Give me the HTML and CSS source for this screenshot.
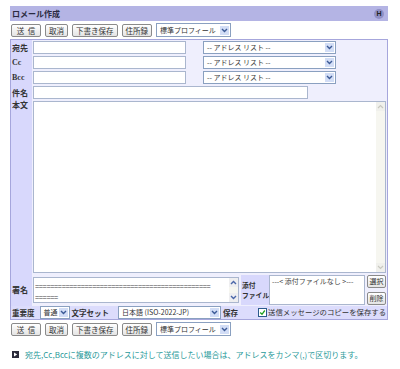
FILE: index.html
```html
<!DOCTYPE html>
<html lang="ja">

<head>
  <meta charset="UTF-8">
  <title>メール作成</title>
  <link rel="stylesheet" href="styles.css">
</head>

<body>
  <div class="mail">

    <div class="titlebar">
      <span class="title">ロメール作成</span>
      <span class="help">H</span>
    </div>

    <div class="toolbar">
      <span class="btn send">送&nbsp;&nbsp;信</span>
      <span class="btn">取消</span>
      <span class="btn">下書き保存</span>
      <span class="btn">住所録</span>
      <span class="select profile"><span class="val">標準プロフィール</span><span class="arrow"><svg width="7" height="5" viewBox="0 0 7 5"><path d="M1 1l2.5 2.5L6 1" fill="none" stroke="#3c5a96" stroke-width="1.4"/></svg></span></span>
    </div>

    <div class="form">
      <div class="row">
        <div class="label">宛先</div>
        <div class="field">
          <span class="input addr"></span>
          <span class="select list"><span class="val">-- アドレス リスト --</span><span class="arrow"><svg width="7" height="5" viewBox="0 0 7 5"><path d="M1 1l2.5 2.5L6 1" fill="none" stroke="#3c5a96" stroke-width="1.4"/></svg></span></span>
        </div>
      </div>
      <div class="row">
        <div class="label latin">Cc</div>
        <div class="field">
          <span class="input addr"></span>
          <span class="select list"><span class="val">-- アドレス リスト --</span><span class="arrow"><svg width="7" height="5" viewBox="0 0 7 5"><path d="M1 1l2.5 2.5L6 1" fill="none" stroke="#3c5a96" stroke-width="1.4"/></svg></span></span>
        </div>
      </div>
      <div class="row">
        <div class="label latin">Bcc</div>
        <div class="field">
          <span class="input addr"></span>
          <span class="select list"><span class="val">-- アドレス リスト --</span><span class="arrow"><svg width="7" height="5" viewBox="0 0 7 5"><path d="M1 1l2.5 2.5L6 1" fill="none" stroke="#3c5a96" stroke-width="1.4"/></svg></span></span>
        </div>
      </div>
      <div class="row">
        <div class="label">件名</div>
        <div class="field">
          <span class="input subject"></span>
        </div>
      </div>

      <div class="row body-row">
        <div class="label top">本文</div>
        <div class="field">
          <div class="textbox body">
            <div class="text"></div>
            <div class="scroll pale">
              <span class="sbtn"><svg width="7" height="5" viewBox="0 0 7 5"><path d="M1 4l2.5-2.5L6 4" fill="none" stroke="#c8c8c0" stroke-width="1.2"/></svg></span>
              <span class="sbtn"><svg width="7" height="5" viewBox="0 0 7 5"><path d="M1 1l2.5 2.5L6 1" fill="none" stroke="#c8c8c0" stroke-width="1.2"/></svg></span>
            </div>
          </div>
        </div>
      </div>

      <div class="row sign-row">
        <div class="label">署名</div>
        <div class="field">
          <div class="textbox sign">
            <div class="text">==============================================<br>======</div>
            <div class="scroll">
              <span class="sbtn"><svg width="7" height="5" viewBox="0 0 7 5"><path d="M1 4l2.5-2.5L6 4" fill="none" stroke="#4a66a8" stroke-width="1.4"/></svg></span>
              <span class="sbtn"><svg width="7" height="5" viewBox="0 0 7 5"><path d="M1 1l2.5 2.5L6 1" fill="none" stroke="#4a66a8" stroke-width="1.4"/></svg></span>
            </div>
          </div>
          <div class="label attach">添付<br>ファイル</div>
          <div class="filebox">---&lt; 添付ファイルなし &gt;---</div>
          <div class="filebtns">
            <span class="btn small">選択</span>
            <span class="btn small">削除</span>
          </div>
        </div>
      </div>

      <div class="row opts">
        <span class="opt-label">重要度</span>
        <span class="select prio"><span class="val">普通</span><span class="arrow"><svg width="7" height="5" viewBox="0 0 7 5"><path d="M1 1l2.5 2.5L6 1" fill="none" stroke="#3c5a96" stroke-width="1.4"/></svg></span></span>
        <span class="opt-label">文字セット</span>
        <span class="select charset"><span class="val">日本語 (ISO-2022-JP)</span><span class="arrow"><svg width="7" height="5" viewBox="0 0 7 5"><path d="M1 1l2.5 2.5L6 1" fill="none" stroke="#3c5a96" stroke-width="1.4"/></svg></span></span>
        <span class="opt-label">保存</span>
        <span class="check"><svg width="7" height="7" viewBox="0 0 7 7"><path d="M1.2 3.5l1.8 1.8 2.8-3.8" fill="none" stroke="#21a121" stroke-width="1.3"/></svg></span>
        <span class="check-text">送信メッセージのコピーを保存する</span>
      </div>
    </div>

    <div class="toolbar">
      <span class="btn send">送&nbsp;&nbsp;信</span>
      <span class="btn">取消</span>
      <span class="btn">下書き保存</span>
      <span class="btn">住所録</span>
      <span class="select profile"><span class="val">標準プロフィール</span><span class="arrow"><svg width="7" height="5" viewBox="0 0 7 5"><path d="M1 1l2.5 2.5L6 1" fill="none" stroke="#3c5a96" stroke-width="1.4"/></svg></span></span>
    </div>

    <p class="note">
      <svg class="note-icon" width="7" height="7" viewBox="0 0 7 7"><rect width="7" height="7" fill="#2b2b3a"/><path d="M2 1.5L5.2 3.5 2 5.5z" fill="#fff"/></svg>
      宛先,Cc,Bccに複数のアドレスに対して送信したい場合は、アドレスをカンマ(,)で区切ります。
    </p>

  </div>
</body>

</html>
```

FILE: styles.css
```css
body {
  margin: 0;
  font-family: "Noto Sans CJK JP", sans-serif;
  font-size: 8px;
  line-height: 1.2;
  color: #333;
  background: #fff;
}

.mail {
  width: 378px;
  padding: 6px 0 0 10px;
}

.titlebar {
  height: 15px;
  background: #b4b4e4;
  display: flex;
  align-items: center;
  justify-content: space-between;
  padding: 0 4px 0 2px;
}

.title {
  font-weight: bold;
  font-size: 8px;
  color: #2a2a40;
}

.help {
  width: 10px;
  height: 10px;
  border-radius: 50%;
  background: #9090c6;
  color: #222;
  font-family: "Liberation Sans", sans-serif;
  font-weight: bold;
  font-size: 7px;
  line-height: 10px;
  text-align: center;
}

.toolbar {
  display: flex;
  align-items: center;
  gap: 4px;
  height: 14px;
  margin: 2px 0 2px 1px;
}

.btn {
  display: inline-flex;
  align-items: center;
  justify-content: center;
  flex: none;
  height: 11px;
  padding: 0 3px;
  border: 1px solid #8a8a8a;
  border-radius: 2px;
  background: linear-gradient(#ffffff, #e4e4e4);
  font-size: 7.5px;
  line-height: 11px;
  color: #333;
  white-space: nowrap;
}

.btn.send {
  width: 22px;
}

.select {
  display: inline-flex;
  align-items: center;
  flex: none;
  height: 11px;
  border: 1px solid #8aa0c0;
  background: #fff;
  font-size: 7px;
  line-height: 11px;
  color: #333;
  white-space: nowrap;
}

.select .val {
  flex: 1;
  padding-left: 3px;
  overflow: hidden;
}

.select .arrow {
  flex: none;
  width: 9px;
  height: 9px;
  margin-right: 1px;
  background: #d2ddf6;
  display: flex;
  align-items: center;
  justify-content: center;
}

.profile {
  width: 73px;
  height: 12px;
}

.form {
  border: 1px solid #a6a6dc;
  background: #efeffd;
}

.row {
  display: flex;
  height: 15px;
}

.label {
  flex: none;
  width: 20px;
  background: #d8d8fc;
  font-weight: bold;
  font-size: 8px;
  display: flex;
  align-items: center;
  padding-left: 1px;
  white-space: nowrap;
}

.label.latin {
  font-family: "Liberation Serif", serif;
  font-size: 8px;
}

.label.top {
  align-items: flex-start;
}

.field {
  flex: 1;
  display: flex;
  align-items: center;
  padding-left: 1px;
}

.input {
  flex: none;
  height: 11px;
  border: 1px solid #aab6ce;
  background: #fff;
}

.input.addr {
  width: 151px;
}

.input.subject {
  width: 273px;
}

.select.list {
  width: 131px;
  margin-left: 17px;
}

.body-row {
  height: 174px;
}

.body-row .field {
  align-items: stretch;
  padding: 1px;
}

.textbox {
  display: flex;
  border: 1px solid #aab6ce;
  background: #fff;
}

.textbox .text {
  flex: 1;
  padding: 1px 2px;
  font-size: 8px;
  line-height: 9px;
  color: #555;
  overflow: hidden;
  white-space: nowrap;
}

.textbox.body {
  flex: 1;
}

.scroll {
  flex: none;
  width: 9px;
  display: flex;
  flex-direction: column;
  justify-content: space-between;
  background: #f6f6f0;
}

.sbtn {
  height: 9px;
  display: flex;
  align-items: center;
  justify-content: center;
  background: #eeeef0;
}

.pale .sbtn {
  background: #f0f0ec;
}

.sign-row {
  height: 32px;
}

.sign-row .field {
  align-items: stretch;
  padding: 1px;
}

.textbox.sign {
  flex: none;
  width: 204px;
  margin: 2px 0 2px;
}

.textbox.sign .text {
  padding: 2px 1px 0;
  font-size: 7.5px;
  line-height: 11px;
  letter-spacing: -0.35px;
  color: #444;
}

.label.attach {
  width: 27px;
  margin-left: 2px;
  padding-left: 1px;
  font-size: 6.8px;
  line-height: 10px;
}

.filebox {
  flex: none;
  width: 90px;
  border: 1px solid #aab6ce;
  background: #fff;
  font-size: 7px;
  padding: 1px 2px;
  line-height: 9px;
  color: #444;
  white-space: nowrap;
}

.filebtns {
  display: flex;
  flex-direction: column;
  justify-content: space-between;
  margin-left: 2px;
  flex: 1;
}

.btn.small {
  height: 11px;
  padding: 0;
  font-size: 7px;
}

.opts {
  height: 13px;
  align-items: center;
  background: #dcdcfc;
  padding-left: 1px;
  white-space: nowrap;
}

.opt-label {
  flex: none;
  font-weight: bold;
  font-size: 7.5px;
}

.select.prio {
  width: 28px;
  margin: 0 2px 0 5px;
}

.select.charset {
  width: 101px;
  margin: 0 2px 0 9px;
}

.check {
  flex: none;
  width: 7px;
  height: 7px;
  border: 1px solid #2c5a8c;
  background: #fff;
  display: flex;
  margin: 0 1px 0 20px;
}

.check-text {
  flex: none;
  font-size: 7.4px;
}

.note {
  margin: 14px 0 0 2px;
  color: #2a9a9a;
  font-size: 8px;
  display: flex;
  align-items: center;
  gap: 6px;
  white-space: nowrap;
}

.note-icon {
  flex: none;
}
```
